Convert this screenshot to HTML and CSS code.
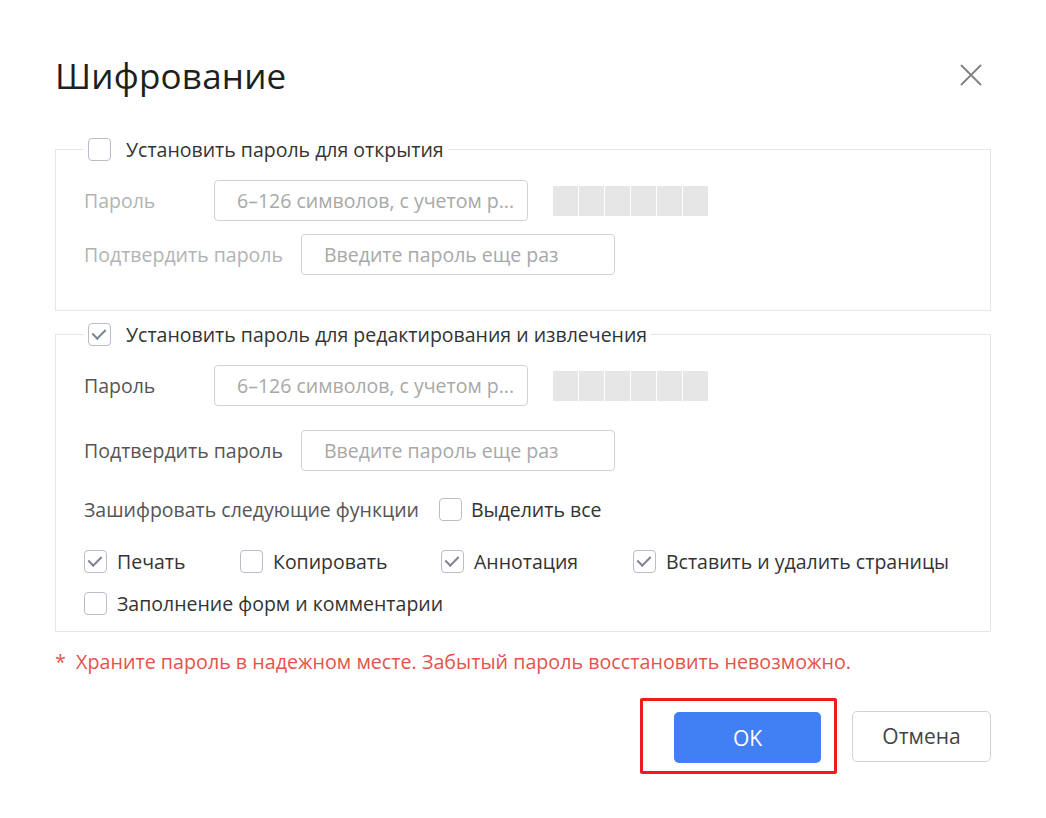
FILE: index.html
```html
<!DOCTYPE html>
<html lang="ru">
<head>
    <meta charset="UTF-8" />
    <title>Шифрование</title>
    <link rel="stylesheet" href="styles.css">
</head>
<body>

<div class="dialog">

    <div class="dialog-header">
        <h1 class="dialog-title">Шифрование</h1>
        <button class="close-btn" aria-label="Закрыть">
            <svg width="24" height="24" viewBox="0 0 24 24">
                <path d="M2 2 L22 22 M22 2 L2 22" stroke="#808080" stroke-width="1.8" fill="none"/>
            </svg>
        </button>
    </div>

    <!-- open password -->
    <fieldset class="section section-disabled">
        <legend class="section-legend">
            <span class="checkbox"></span>
            <span>Установить пароль для открытия</span>
        </legend>
        <div class="form-row">
            <label class="field-label field-label-short">Пароль</label>
            <div class="input">6–126 символов, с учетом р...</div>
            <div class="strength">
                <span></span><span></span><span></span><span></span><span></span><span></span>
            </div>
        </div>
        <div class="form-row form-row-tight">
            <label class="field-label">Подтвердить пароль</label>
            <div class="input">Введите пароль еще раз</div>
        </div>
    </fieldset>

    <!-- edit password -->
    <fieldset class="section section-edit">
        <legend class="section-legend">
            <span class="checkbox checked"></span>
            <span>Установить пароль для редактирования и извлечения</span>
        </legend>
        <div class="form-row">
            <label class="field-label field-label-short">Пароль</label>
            <div class="input">6–126 символов, с учетом р...</div>
            <div class="strength">
                <span></span><span></span><span></span><span></span><span></span><span></span>
            </div>
        </div>
        <div class="form-row">
            <label class="field-label">Подтвердить пароль</label>
            <div class="input">Введите пароль еще раз</div>
        </div>

        <div class="select-row">
            <span class="field-label">Зашифровать следующие функции</span>
            <label class="check-item"><span class="checkbox"></span>Выделить все</label>
        </div>

        <div class="perm-grid">
            <label class="check-item perm-print"><span class="checkbox checked"></span>Печать</label>
            <label class="check-item perm-copy"><span class="checkbox"></span>Копировать</label>
            <label class="check-item perm-note"><span class="checkbox checked"></span>Аннотация</label>
            <label class="check-item"><span class="checkbox checked"></span>Вставить и удалить страницы</label>
        </div>
        <div class="perm-grid perm-grid-last">
            <label class="check-item"><span class="checkbox"></span>Заполнение форм и комментарии</label>
        </div>
    </fieldset>

    <p class="warning">*&nbsp; Храните пароль в надежном месте. Забытый пароль восстановить невозможно.</p>

    <div class="dialog-footer">
        <div class="highlight">
            <button class="btn btn-primary">OK</button>
        </div>
        <button class="btn btn-default">Отмена</button>
    </div>

</div>

</body>
</html>
```

FILE: styles.css
```css
body {
    margin: 0;
    background: #fff;
    font-family: "Open Sans", "Liberation Sans", sans-serif;
    color: #333;
}

.dialog {
    width: 936px;
    padding: 48px 55px 0 55px;
}

.dialog-header {
    display: flex;
    justify-content: space-between;
    align-items: center;
    height: 54px;
}

.dialog-title {
    margin: 0;
    font-size: 35px;
    font-weight: 400;
    color: #1f1f1f;
    letter-spacing: 0.2px;
}

.close-btn {
    border: none;
    background: none;
    padding: 0;
    margin-right: 8px;
    width: 24px;
    height: 24px;
    cursor: pointer;
}

/* Sections */
.section {
    margin: 34px 0 0 0;
    padding: 18px 28px 35px 28px;
    border: 1px solid #e6e6e6;
    font-size: 19.5px;
}

.section-edit {
    margin-top: 10px;
    padding-bottom: 14px;
}

.section-legend {
    display: flex;
    align-items: center;
    gap: 15px;
    padding: 0 4px;
    margin-left: 0;
    color: #333;
    height: 26px;
}

.section-disabled .field-label {
    color: #b3b3b3;
}

.form-row {
    display: flex;
    align-items: center;
    margin-top: 0;
}

.form-row + .form-row {
    margin-top: 24px;
}

.form-row.form-row-tight {
    margin-top: 13px;
}

.field-label {
    color: #555;
    margin-right: 18px;
    white-space: nowrap;
}

.field-label-short {
    min-width: 112px;
}

.input {
    box-sizing: border-box;
    width: 314px;
    height: 41px;
    border: 1px solid #d2d2d2;
    border-radius: 4px;
    padding: 0 22px;
    line-height: 39px;
    color: #a8a8a8;
    font-size: 19.5px;
    white-space: nowrap;
    overflow: hidden;
}

.strength {
    display: flex;
    gap: 1px;
    margin-left: 25px;
}

.strength span {
    width: 25px;
    height: 30px;
    background: #e6e6e6;
}

/* Checkboxes */
.checkbox {
    box-sizing: border-box;
    display: inline-block;
    flex: none;
    width: 23px;
    height: 23px;
    border: 1.5px solid #b9bdc8;
    border-radius: 4px;
    background: #fff;
    position: relative;
}

.checkbox.checked::after {
    content: "";
    position: absolute;
    left: 6px;
    top: 2px;
    width: 6px;
    height: 11px;
    border: solid #7d8494;
    border-width: 0 2px 2px 0;
    transform: rotate(45deg);
}

.check-item {
    display: inline-flex;
    align-items: center;
    gap: 10px;
    color: #333;
    white-space: nowrap;
}

.select-row {
    display: flex;
    align-items: center;
    margin-top: 25px;
}

.select-row .field-label {
    margin-right: 20px;
}

.select-row .check-item {
    gap: 9px;
}

.perm-grid {
    display: flex;
    align-items: center;
    margin-top: 25px;
}

.perm-grid-last {
    margin-top: 15px;
}

.perm-print {
    width: 156px;
}

.perm-copy {
    width: 201px;
}

.perm-note {
    width: 192px;
}

.warning {
    margin: 16px 0 0 0;
    color: #e5534b;
    font-size: 19.7px;
}

/* Footer */
.dialog-footer {
    display: flex;
    justify-content: flex-end;
    align-items: center;
    margin-top: 23px;
}

.highlight {
    border: 3.5px solid #f21a1a;
    border-radius: 2px;
    padding: 11px 13px 8px 31px;
    margin-right: 15px;
}

.btn {
    font-family: inherit;
    font-size: 21px;
    height: 51px;
    border-radius: 5px;
    cursor: pointer;
}

.btn-primary {
    display: block;
    width: 147px;
    background: #417ff5;
    color: #fff;
    border: none;
}

.btn-default {
    width: 139px;
    background: #fff;
    color: #444;
    border: 1px solid #d2d2d2;
}
```
